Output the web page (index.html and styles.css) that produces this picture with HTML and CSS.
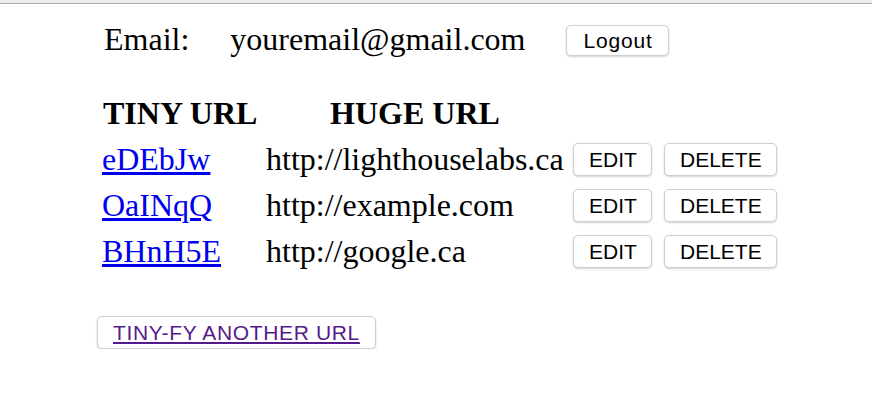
FILE: index.html
```html
<!DOCTYPE html>
<html>
<head>
<meta charset="utf-8">
<link rel="stylesheet" href="styles.css">
</head>
<body>
<div class="topbar"></div>
<main class="page">
  <div class="account">
    <span class="label">Email:</span>
    <span class="email">youremail@gmail.com</span>
    <button class="btn logout">Logout</button>
  </div>
  <div class="urls">
    <div class="head tiny">TINY URL</div>
    <div class="head huge">HUGE URL</div>
    <div></div>
    <div></div>

    <div class="cell"><a class="short" href="#">eDEbJw</a></div>
    <div class="cell">http://lighthouselabs.ca</div>
    <div class="cell"><button class="btn">EDIT</button></div>
    <div class="cell"><button class="btn">DELETE</button></div>

    <div class="cell"><a class="short" href="#">OaINqQ</a></div>
    <div class="cell">http://example.com</div>
    <div class="cell"><button class="btn">EDIT</button></div>
    <div class="cell"><button class="btn">DELETE</button></div>

    <div class="cell"><a class="short" href="#">BHnH5E</a></div>
    <div class="cell">http://google.ca</div>
    <div class="cell"><button class="btn">EDIT</button></div>
    <div class="cell"><button class="btn">DELETE</button></div>
  </div>
  <div class="another">
    <button class="btn wide"><a class="visited" href="#">TINY-FY ANOTHER URL</a></button>
  </div>
</main>
</body>
</html>
```

FILE: styles.css
```css
html, body {
  margin: 0;
  padding: 0;
  background: #ffffff;
}

body {
  font-family: "Liberation Serif", "Times New Roman", serif;
  font-size: 32px;
  color: #000;
}

.topbar {
  height: 3px;
  background: #ececec;
  border-bottom: 1px solid #a9a9a9;
}

.page {
  padding-left: 102px;
}

.account {
  display: flex;
  align-items: baseline;
  margin-top: 17px;
  padding-left: 2px;
  line-height: 37px;
}

.account .label {
  margin-right: 41px;
}

.account .email {
  margin-right: 41px;
}

.btn {
  font-family: "Liberation Sans", Arial, sans-serif;
  font-size: 21px;
  line-height: 23px;
  padding: 3px 15px 3px;
  border: 1px solid #cfcfcf;
  border-radius: 5px;
  background: #ffffff;
  color: #000;
  box-shadow: 0 1px 2px rgba(0, 0, 0, 0.18);
  margin: 0;
  vertical-align: baseline;
}

.btn.logout {
  letter-spacing: 0.8px;
  padding: 3px 15px 3px 16px;
  position: relative;
  top: -2px;
}

.urls {
  display: grid;
  grid-template-columns: 164px 307px 91px auto;
  grid-auto-rows: 46px;
  line-height: 46px;
  margin-top: 32px;
  white-space: nowrap;
}

.head {
  font-weight: bold;
}

.head.tiny {
  padding-left: 1px;
}

.head.huge {
  width: 298px;
  text-align: center;
}

.cell .btn {
  padding: 4px 14px 4px 15px;
  line-height: 23px;
  vertical-align: 3px;
}

.short {
  color: #0000ee;
  text-decoration: underline;
}

.another {
  margin-top: 37px;
  margin-left: -5px;
}

.btn.wide {
  padding: 4px 15px 4px;
  line-height: 23px;
}

.visited {
  color: #551a8b;
  text-decoration: underline;
  letter-spacing: 0.65px;
}
```
